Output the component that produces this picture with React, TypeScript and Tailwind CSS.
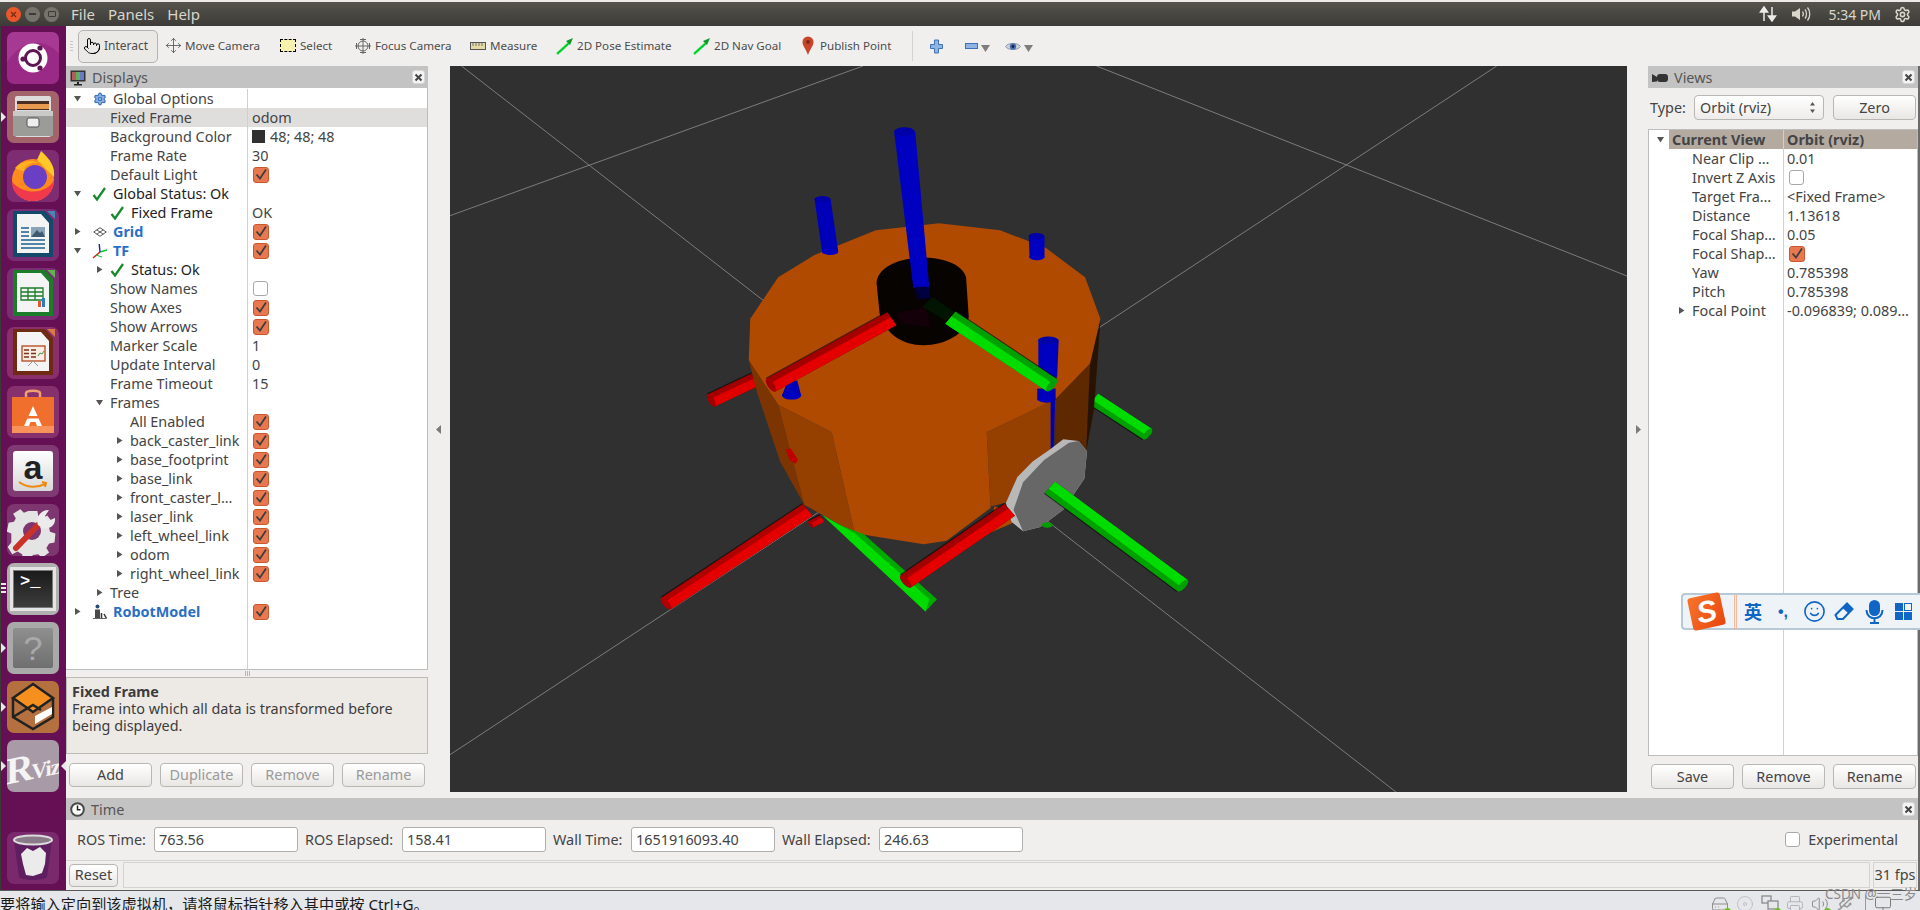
import { Disc, HardDrive, Monitor, Move, Pointer, Printer, Settings, Smile, Usb, Volume2 } from "lucide-react";
import type { ReactNode } from "react";

const CloseBtn = () => (
  <div className="flex h-[14px] w-[13px] items-center justify-center rounded-[3px] border border-[#d8d8d8] bg-[#f4f4f4]">
    <svg width="9" height="9" viewBox="0 0 9 9">
      <path d="M1.5 1.5l6 6M7.5 1.5l-6 6" stroke="#444" strokeWidth="2" />
    </svg>
  </div>
);

const Check = ({ on }: { on: boolean }) =>
  on ? (
    <svg width="16" height="16" viewBox="0 0 16 16" className="shrink-0">
      <rect x="0.5" y="0.5" width="15" height="15" rx="2.5" fill="#e8784f" stroke="#c9582f" />
      <path d="M3.5 7.5l3.5 4 6-9" fill="none" stroke="#3d3d3d" strokeWidth="1.7" />
    </svg>
  ) : (
    <svg width="15" height="15" viewBox="0 0 15 15" className="shrink-0">
      <rect x="0.5" y="0.5" width="14" height="14" rx="2.5" fill="#fff" stroke="#a8a8a8" />
    </svg>
  );

const Arrow = ({ open }: { open: boolean }) => (
  <svg width="9" height="9" viewBox="0 0 9 9" className="shrink-0">
    {open ? <path d="M1 2h7L4.5 7.5z" fill="#555" /> : <path d="M2 1v7l5.5-3.5z" fill="#555" />}
  </svg>
);

const GreenCheck = () => (
  <svg width="15" height="14" viewBox="0 0 15 14" className="shrink-0">
    <path d="M1.5 8l3.5 4.5L13 1" fill="none" stroke="#168a2c" strokeWidth="2.3" />
  </svg>
);

const GearIcon = () => <Settings size={14} className="shrink-0 fill-[#8fb3e6] text-[#3f73bd]" />;

const GridIcon = () => (
  <svg width="14" height="10" viewBox="0 0 14 10" className="shrink-0">
    <path d="M7 .7L13.3 5 7 9.3.7 5zM3.8 2.9l6.4 4.3M10.2 2.9L3.8 7.2" fill="none" stroke="#555" strokeWidth="1" />
  </svg>
);

const TfIcon = () => (
  <svg width="16" height="16" viewBox="0 0 16 16" className="shrink-0">
    <path d="M8 9L1 15" stroke="#e01818" strokeWidth="1.4" />
    <path d="M8 9l7-2" stroke="#12c02a" strokeWidth="1.4" />
    <path d="M8 9l-.8-8" stroke="#1a1acc" strokeWidth="1.4" />
    <path d="M4 12l6 2" stroke="#12c02a" strokeWidth="1" />
  </svg>
);

const RobotIcon = () => (
  <svg width="16" height="16" viewBox="0 0 16 16" className="shrink-0">
    <circle cx="5.5" cy="2.5" r="2" fill="#2c4a78" />
    <rect x="3" y="5.5" width="5" height="9" fill="#4a4a4a" />
    <path d="M9.5 9v5.5M12 10l2.5 4.5" stroke="#333" strokeWidth="1.5" fill="none" />
    <path d="M1 14.5h13" stroke="#666" strokeWidth="1" />
  </svg>
);

type Row = {
  label: string;
  level: 0 | 1 | 2;
  arrow?: "open" | "closed";
  icon?: ReactNode;
  value?: string;
  check?: boolean;
  kind?: "blue" | "dark";
};

const displayRows: Row[] = [
  { label: "Global Options", level: 0, arrow: "open", icon: <GearIcon /> },
  { label: "Fixed Frame", level: 1, value: "odom" },
  { label: "Background Color", level: 1, value: "48; 48; 48" },
  { label: "Frame Rate", level: 1, value: "30" },
  { label: "Default Light", level: 1, check: true },
  { label: "Global Status: Ok", level: 0, arrow: "open", icon: <GreenCheck />, kind: "dark" },
  { label: "Fixed Frame", level: 1, icon: <GreenCheck />, value: "OK", kind: "dark" },
  { label: "Grid", level: 0, arrow: "closed", icon: <GridIcon />, check: true, kind: "blue" },
  { label: "TF", level: 0, arrow: "open", icon: <TfIcon />, check: true, kind: "blue" },
  { label: "Status: Ok", level: 1, arrow: "closed", icon: <GreenCheck />, kind: "dark" },
  { label: "Show Names", level: 1, check: false },
  { label: "Show Axes", level: 1, check: true },
  { label: "Show Arrows", level: 1, check: true },
  { label: "Marker Scale", level: 1, value: "1" },
  { label: "Update Interval", level: 1, value: "0" },
  { label: "Frame Timeout", level: 1, value: "15" },
  { label: "Frames", level: 1, arrow: "open" },
  { label: "All Enabled", level: 2, check: true },
  { label: "back_caster_link", level: 2, arrow: "closed", check: true },
  { label: "base_footprint", level: 2, arrow: "closed", check: true },
  { label: "base_link", level: 2, arrow: "closed", check: true },
  { label: "front_caster_l…", level: 2, arrow: "closed", check: true },
  { label: "laser_link", level: 2, arrow: "closed", check: true },
  { label: "left_wheel_link", level: 2, arrow: "closed", check: true },
  { label: "odom", level: 2, arrow: "closed", check: true },
  { label: "right_wheel_link", level: 2, arrow: "closed", check: true },
  { label: "Tree", level: 1, arrow: "closed" },
  { label: "RobotModel", level: 0, arrow: "closed", icon: <RobotIcon />, check: true, kind: "blue" },
];

const viewRows: { label: string; value?: string; check?: boolean; arrow?: boolean }[] = [
  { label: "Near Clip …", value: "0.01" },
  { label: "Invert Z Axis", check: false },
  { label: "Target Fra…", value: "<Fixed Frame>" },
  { label: "Distance", value: "1.13618" },
  { label: "Focal Shap…", value: "0.05" },
  { label: "Focal Shap…", check: true },
  { label: "Yaw", value: "0.785398" },
  { label: "Pitch", value: "0.785398" },
  { label: "Focal Point", value: "-0.096839; 0.089…", arrow: true },
];

const levelPad = { 0: "pl-[7px]", 1: "pl-[29px]", 2: "pl-[49px]" };
const levelSlot = { 0: "w-[19px]", 1: "w-[15px]", 2: "w-[15px]" };

function DisplayRow({ row, active }: { row: Row; active: boolean }) {
  const text =
    row.kind === "blue" ? "font-bold text-[#2a6fc4]" : row.kind === "dark" ? "text-[#222222]" : "text-[#444444]";
  return (
    <div className={`flex h-[19px] items-center ${active ? "bg-[#dfdedc]" : ""}`}>
      <div className={`flex h-full w-[181px] shrink-0 items-center ${levelPad[row.level]}`}>
        <div className={`shrink-0 ${levelSlot[row.level]}`}>{row.arrow && <Arrow open={row.arrow === "open"} />}</div>
        {row.icon && <div className="mr-[6px] flex w-[15px] shrink-0 justify-center">{row.icon}</div>}
        <span className={`whitespace-nowrap ${text}`}>{row.label}</span>
      </div>
      <div className="flex h-full flex-1 items-center gap-[5px] border-l border-[#d0d0d0] pl-[4px] text-[#444444]">
        {row.label === "Background Color" && <span className="h-[13px] w-[13px] bg-[#303030]" />}
        {row.value}
        {row.check !== undefined && (
          <span className="ml-[1px]">
            <Check on={row.check} />
          </span>
        )}
      </div>
    </div>
  );
}

const Btn = ({ label, w, off, h = "h-[25px]" }: { label: string; w: string; off?: boolean; h?: string }) => (
  <div
    className={`flex ${w} ${h} items-center justify-center rounded-[4px] border border-[#b9b7b4] bg-linear-to-b from-white to-[#e9e7e4] ${
      off ? "text-[#9a9a9a]" : "text-[#444444]"
    }`}
  >
    {label}
  </div>
);

function ToolItem({ icon, label, className }: { icon: ReactNode; label: string; className: string }) {
  return (
    <div className={`flex shrink-0 items-center whitespace-nowrap text-[11.6px] text-[#4c4c4c] ${className}`}>
      {icon}
      {label}
    </div>
  );
}

const PoseArrow = () => (
  <svg width="18" height="18" viewBox="0 0 18 18">
    <path d="M1 17L13 6" stroke="#12e83a" strokeWidth="2.4" />
    <path d="M10 4l7-3-3 7z" fill="#0b9a28" />
    <path d="M1.5 16.5L12 7" stroke="#0b7a22" strokeWidth="0.6" />
  </svg>
);

const Toolbar = () => (
  <div className="flex h-[40px] items-center bg-[#f0efed] pl-[4px]">
    <div className="mr-[5px] flex w-[3px] flex-col gap-[2px]">
      <span className="h-[1px] bg-[#c8c8c8]" />
      <span className="h-[1px] bg-[#c8c8c8]" />
      <span className="h-[1px] bg-[#c8c8c8]" />
      <span className="h-[1px] bg-[#c8c8c8]" />
    </div>
    <div className="flex h-[33px] w-[80px] shrink-0 items-center gap-[3px] rounded-[5px] border border-[#b5b3b0] bg-[#ebe9e6] pl-[4px] text-[12px] text-[#4c4c4c]">
      <Pointer size={18} strokeWidth={1.3} className="text-black" />
      Interact
    </div>
    <ToolItem
      className="ml-[7px] w-[115px] gap-[3px]"
      icon={<Move size={17} strokeWidth={1.2} className="text-[#555555]" />}
      label="Move Camera"
    />
    <ToolItem
      className="w-[74px] gap-[4px]"
      icon={<span className="h-[13px] w-[16px] border border-dashed border-black bg-[#f7f3ae]" />}
      label="Select"
    />
    <ToolItem
      className="w-[116px] gap-[3px]"
      icon={
        <svg width="18" height="18" viewBox="0 0 18 18" fill="none" stroke="#666" strokeWidth="1">
          <circle cx="9" cy="9" r="5" />
          <path d="M9 1v16M1 9h16M6 2.5h6M6 15.5h6M2.5 6v6M15.5 6v6" />
        </svg>
      }
      label="Focus Camera"
    />
    <ToolItem
      className="w-[86px] gap-[4px]"
      icon={
        <svg width="16" height="8" viewBox="0 0 16 8">
          <rect x=".5" y=".5" width="15" height="7" fill="#e6d9a8" stroke="#555" />
          <path d="M3 1v3M6 1v3M9 1v3M12 1v3" stroke="#555" strokeWidth=".8" />
        </svg>
      }
      label="Measure"
    />
    <ToolItem className="w-[137px] gap-[3px]" icon={<PoseArrow />} label="2D Pose Estimate" />
    <ToolItem className="w-[109px] gap-[3px]" icon={<PoseArrow />} label="2D Nav Goal" />
    <ToolItem
      className="w-[110px] gap-[6px]"
      icon={
        <svg width="12" height="20" viewBox="0 0 12 20">
          <path d="M6 19C4 13 .5 10 .5 6a5.5 5.5 0 0111 0C11.500 10 8 13 6 19z" fill="#c8452a" />
          <circle cx="6" cy="6" r="2" fill="#7d2a18" />
        </svg>
      }
      label="Publish Point"
    />
    <span className="h-[30px] w-[1px] bg-[#d4d3d1]" />
    <svg width="13" height="15" viewBox="0 0 13 15" className="ml-[17px]">
      <path d="M4.500 1h4v4.500h4v4h-4V14h-4V9.500h-4v-4h4z" fill="#8fb4e4" stroke="#3e72b8" />
    </svg>
    <svg width="13" height="6" viewBox="0 0 13 6" className="ml-[22px]">
      <rect x=".5" y=".5" width="12" height="5" fill="#8fb4e4" stroke="#3e72b8" />
    </svg>
    <svg width="9" height="7" viewBox="0 0 9 7" className="ml-[3px] mt-[4px]">
      <path d="M0 0h9L4.500 7z" fill="#7d7d7d" />
    </svg>
    <svg width="16" height="11" viewBox="0 0 16 11" className="ml-[15px]">
      <path d="M.5 5.500C3 1.500 13 1.500 15.500 5.500 13 9.500 3 9.500.5 5.500z" fill="#cdd4e0" stroke="#8b93a3" />
      <circle cx="8" cy="5.500" r="3.200" fill="#4a6fb0" />
      <circle cx="8" cy="5.500" r="1.400" fill="#15203c" />
    </svg>
    <svg width="9" height="7" viewBox="0 0 9 7" className="ml-[3px] mt-[4px]">
      <path d="M0 0h9L4.500 7z" fill="#7d7d7d" />
    </svg>
  </div>
);

const Tile = ({
  bg,
  left,
  right,
  pips,
  children,
}: {
  bg: string;
  left?: boolean;
  right?: boolean;
  pips?: boolean;
  children: ReactNode;
}) => (
  <div className="relative h-[52px] w-[65px] shrink-0">
    {left && <span className="absolute left-0 top-[21px] h-0 w-0 border-y-[5px] border-l-[5px] border-y-transparent border-l-[#e8e8e8]" />}
    {right && <span className="absolute right-0 top-[21px] h-0 w-0 border-y-[5px] border-r-[5px] border-y-transparent border-r-[#e8e8e8]" />}
    {pips && (
      <span className="absolute left-0 top-[20px] flex flex-col gap-[2px]">
        <span className="h-[2px] w-[5px] bg-[#e8e8e8]" />
        <span className="h-[2px] w-[5px] bg-[#e8e8e8]" />
        <span className="h-[2px] w-[5px] bg-[#e8e8e8]" />
      </span>
    )}
    <div className={`absolute left-[6px] top-0 flex h-[52px] w-[52px] items-center justify-center overflow-hidden rounded-[7px] ${bg}`}>
      {children}
    </div>
  </div>
);

const Launcher = () => (
  <div className="flex h-full w-[66px] shrink-0 flex-col gap-[7px] border-l border-[#3c3a36] bg-[#650f55] pt-[6px]">
    <Tile bg="bg-[#9a2a86]">
      <svg width="52" height="52" viewBox="0 0 52 52">
        <path d="M0 30C14 8 38 4 52 22V0H0z" fill="#b14aa0" opacity=".5" />
        <circle cx="26" cy="26" r="14.500" fill="#fff" />
        <circle cx="26" cy="26" r="7.500" fill="none" stroke="#5e1650" strokeWidth="3" />
        <circle cx="33" cy="16" r="2.600" fill="#5e1650" />
        <circle cx="16" cy="27" r="2.600" fill="#5e1650" />
        <circle cx="33" cy="36" r="2.600" fill="#5e1650" />
      </svg>
    </Tile>
    <Tile bg="bg-[#a2636b]" left>
      <svg width="52" height="52" viewBox="0 0 52 52">
        <rect x="8" y="5" width="36" height="41" rx="2" fill="#dcdcdc" />
        <rect x="10" y="10" width="32" height="9" fill="#4b2e22" />
        <rect x="10" y="13" width="32" height="5" fill="#e89a50" />
        <rect x="6" y="20" width="40" height="25" fill="#9b9b97" />
        <rect x="6" y="20" width="40" height="5" fill="#c9c9c6" />
        <rect x="20" y="27" width="12" height="9" rx="2" fill="#eeeeee" stroke="#555" />
      </svg>
    </Tile>
    <Tile bg="bg-[#7f2d72]">
      <svg width="52" height="52" viewBox="0 0 52 52">
        <circle cx="26" cy="30" r="21" fill="#ff8a1e" />
        <path d="M34 1c10 9 14 16 13 26L30 10z" fill="#ffc928" />
        <path d="M5 32C5 44 16 51 26 51 38 51 47 42 47 30 40 44 18 46 5 32z" fill="#f03a4c" />
        <circle cx="28" cy="27" r="12" fill="#6b3fc4" />
        <path d="M8 18c6-7 15-9 24-5-8-1-14 2-15 8-3 0-6-1-9-3z" fill="#ffb11f" />
      </svg>
    </Tile>
    <Tile bg="bg-[#7b2d74]">
      <svg width="52" height="52" viewBox="0 0 52 52">
        <path d="M6 2h32l8 9v37H6z" fill="#14496b" />
        <path d="M10 5h24l8 9v30H10z" fill="#f4f4f4" />
        <path d="M40 2h8v8z" fill="#4a86b4" />
        <rect x="24" y="18" width="14" height="10" fill="#8aa4b8" />
        <path d="M24 28l6-7 3 3 2-2 3 6z" fill="#3e5a6e" />
        <path d="M14 19h8M14 23h8M14 27h8M14 31h24M14 35h24M14 39h24" stroke="#1c5f8e" strokeWidth="1.700" />
      </svg>
    </Tile>
    <Tile bg="bg-[#7b2d74]">
      <svg width="52" height="52" viewBox="0 0 52 52">
        <path d="M6 2h32l8 9v37H6z" fill="#1b7c2a" />
        <path d="M10 5h24l8 9v30H10z" fill="#f4f4f4" />
        <path d="M40 2h8v8z" fill="#62b04e" />
        <path d="M14 20h22v12H14zM14 24h22M14 28h22M21 20v12M28 20v12" fill="none" stroke="#1b7c2a" strokeWidth="1.300" />
        <rect x="31" y="33" width="3" height="6" fill="#e05a2a" />
        <rect x="35" y="30" width="3" height="9" fill="#2a7cc8" />
      </svg>
    </Tile>
    <Tile bg="bg-[#8b2f6c]">
      <svg width="52" height="52" viewBox="0 0 52 52">
        <path d="M6 2h32l8 9v37H6z" fill="#6e2a12" />
        <path d="M10 5h24l8 9v30H10z" fill="#f4f4f4" />
        <path d="M40 2h8v8z" fill="#d87a42" />
        <rect x="15" y="19" width="23" height="15" fill="#f8ece4" stroke="#b3471c" strokeWidth="1.300" />
        <path d="M17 23h5M17 26.500h5M17 30h5M24 23h5M24 26.500h5M24 30h5" stroke="#7b3218" strokeWidth="1.300" />
        <path d="M31 29l2-3 2 1 2-3" stroke="#3c9a3c" strokeWidth="1" fill="none" />
        <path d="M26 34l-5 5M26 34l5 5" stroke="#999" />
      </svg>
    </Tile>
    <Tile bg="bg-[#86306e]">
      <svg width="52" height="52" viewBox="0 0 52 52">
        <path d="M19 12V7c0-3 14-3 14 0v5" fill="none" stroke="#f0a070" strokeWidth="2.500" />
        <rect x="5" y="11" width="42" height="36" fill="#f06f2c" />
        <rect x="5" y="40" width="42" height="7" fill="#f8925a" />
        <path d="M26 20l9 20h-5l-1.500-4h-5L22 40h-5z" fill="#fff" />
        <rect x="17" y="30" width="18" height="2.500" fill="#f06f2c" />
      </svg>
    </Tile>
    <Tile bg="bg-[#7f3a74]">
      <div className="flex h-[40px] w-[40px] flex-col items-center justify-center rounded-[3px] bg-linear-to-b from-white to-[#d8d8d8]">
        <span className="font-['Liberation_Sans',sans-serif] text-[34px] font-bold leading-[28px] text-[#222222]">a</span>
        <svg width="30" height="8" viewBox="0 0 30 8">
          <path d="M1 1c8 6 18 6 26 2M24 1l4 1-1 4" fill="none" stroke="#f08a10" strokeWidth="2" />
        </svg>
      </div>
    </Tile>
    <Tile bg="bg-[#7e3671]">
      <svg width="52" height="52" viewBox="0 0 52 52">
        <path
          d="M21 5h10l1 6 5 2 5-3 6 8-4 5 1 5 6 2-1 10-6 1-3 5 3 5-8 6-4-4-6 1-3 4h-8l-1-5-5-3-6 3-5-8 4-5V30l-5-2 2-10 6-1 2-4-3-5 8-5 4 4z"
          fill="#e4e4e4"
          transform="translate(2.500 2.500) scale(.9)"
        />
        <circle cx="25" cy="27" r="9" fill="#7e3671" />
        <path d="M9 44L33 19" stroke="#c8322a" strokeWidth="6" strokeLinecap="round" />
        <path d="M31 21c-3-7 2-15 11-15l-4 6 3 5 7-3c1 9-9 14-17 7z" fill="#ececec" />
      </svg>
    </Tile>
    <Tile bg="bg-[#b0b0ae]" pips>
      <div className="flex h-[44px] w-[46px] items-center justify-center border-[3px] border-[#e4e4e4] bg-[#7a7a78] p-[1px]">
        <div className="h-full w-full bg-linear-to-b from-[#1b1b1b] to-[#3d3d3d] pl-[6px] pt-[2px] font-['Liberation_Mono',monospace] text-[17px] font-bold leading-[18px] text-white">
          &gt;_
        </div>
      </div>
    </Tile>
    <Tile bg="bg-[#a9a9a9]" left>
      <div className="flex h-[40px] w-[40px] items-center justify-center rounded-[2px] bg-linear-to-b from-[#8f8f8f] to-[#6f6f6f] font-['Liberation_Sans',sans-serif] text-[34px] text-[#a9a9a9]">
        ?
      </div>
    </Tile>
    <Tile bg="bg-[#b4713f]" left>
      <svg width="52" height="52" viewBox="0 0 52 52">
        <path d="M26 3L46 17 26 31 6 17z" fill="#f5901e" stroke="#222" strokeWidth="2.500" />
        <path d="M6 17v19l20 12 20-12V17" fill="none" stroke="#222" strokeWidth="2.500" />
        <path d="M6 36l20-12 8 5" fill="none" stroke="#222" strokeWidth="2.500" />
        <path d="M28 43v-8l17-9v7z" fill="#fff" />
      </svg>
    </Tile>
    <Tile bg="bg-[#a89aa6]" left right>
      <div className="flex -skew-y-12 items-baseline font-['Liberation_Serif',serif] font-bold text-[#f4f4f4]">
        <span className="text-[38px] leading-none">R</span>
        <span className="-ml-[2px] text-[22px] leading-none tracking-[-1px]">Viz</span>
      </div>
    </Tile>
    <div className="mt-auto mb-[6px]">
      <Tile bg="bg-[#7a2a6c]">
        <svg width="52" height="52" viewBox="0 0 52 52">
          <path d="M7 8l5 37c4 4 24 4 28 0l5-37z" fill="#5e1e60" />
          <ellipse cx="26" cy="8" rx="19" ry="4.500" fill="#8a7a8a" stroke="#dcdcdc" strokeWidth="2" />
          <path d="M14 22l6-6 6 3 7-4 6 6-1 11-3 9-9 3-7-1-3-11z" fill="#ecebec" />
        </svg>
      </Tile>
    </div>
  </div>
);

const poly = (x1: number, y1: number, x2: number, y2: number, a: number, b: number) => {
  const len = Math.hypot(x2 - x1, y2 - y1);
  const nx = -(y2 - y1) / len;
  const ny = (x2 - x1) / len;
  return [
    [x1 + nx * a, y1 + ny * a],
    [x2 + nx * a, y2 + ny * a],
    [x2 + nx * b, y2 + ny * b],
    [x1 + nx * b, y1 + ny * b],
  ]
    .map((p) => p.join(","))
    .join(" ");
};

function Cyl({ p, w, c, d, flip }: { p: number[]; w: number; c: string; d: string; flip?: boolean }) {
  const [x1, y1, x2, y2] = p;
  const s = flip ? -1 : 1;
  const angle = (Math.atan2(y2 - y1, x2 - x1) * 180) / Math.PI;
  return (
    <g>
      <polygon points={poly(x1, y1, x2, y2, (s * w) / 2 + s * 3, (-s * w) / 2)} fill="#000" opacity=".6" />
      <polygon points={poly(x1, y1, x2, y2, w / 2, -w / 2)} fill={d} />
      <polygon points={poly(x1, y1, x2, y2, s * w * 0.12, -s * w * 0.5)} fill={c} />
      <ellipse cx={x2} cy={y2} rx={w / 5} ry={w / 2} transform={`rotate(${angle} ${x2} ${y2})`} fill={d} />
    </g>
  );
}

const Scene = () => (
  <svg viewBox="450 66 1177 726" className="block h-full w-full">
    <g stroke="#7c7c7c" strokeWidth="1">
      <path d="M461.500 66L1396 792" />
      <path d="M450 215.700L863 66" />
      <path d="M1096.500 66L1627 276" />
      <path d="M1496.700 66L450 754.700" />
    </g>
    <g transform="translate(650 100) scale(0.38265 0.34439)">
      <Cyl p={[275, 812, 160, 872]} w={40} c="#e00000" d="#a00000" />
      <Cyl p={[1160, 868, 1300, 970]} w={38} c="#00dc00" d="#00a000" />
      <polygon points="258,755 335,885 403,1175 340,1050 280,850" fill="#7c3400" />
      <polygon points="335,885 475,965 535,1258 403,1175" fill="#953f00" />
      <polygon points="880,965 1060,868 1055,1010 945,1165 890,1180" fill="#953f00" />
      <polygon points="1060,868 1150,765 1140,1020 1060,1005" fill="#5f2900" />
      <polygon points="1150,765 1177,640 1160,900 1140,1020" fill="#281200" />
      <polygon points="590,378 755,358 915,378 1035,430 1137,515 1177,635 1150,765 1060,868 880,965 890,1185 775,1280 715,1290 535,1258 475,965 335,885 258,755 262,635 335,515 430,450" fill="#b04a00" />
      <polygon points="885,1258 945,1230 960,1200 900,1180" fill="#b04a00" />
      <polygon points="355,1015 368,1012 387,1045 380,1056 365,1045" fill="#c00000" />
      <Cyl p={[450, 1215, 420, 1232]} w={22} c="#d80000" d="#a00000" />
      <polygon points="450,1205 475,1225 560,1262 750,1450 720,1485" fill="#00a800" />
      <polygon points="450,1205 535,1258 730,1450 720,1485" fill="#00dc00" />
      <path d="M592 530C596 490 640 460 710 458 770 456 818 480 826 515L833 630C825 680 770 712 715 712 660 712 615 680 600 620z" fill="#070300" />
      <polygon points="638,92 693,92 730,545 688,545" fill="#0000c0" />
      <ellipse cx="665" cy="92" rx="27" ry="13" fill="#0000a8" />
      <polygon points="692,542 730,542 733,575 700,578" fill="#000040" />
      <polygon points="430,288 472,288 492,440 450,443" fill="#0000b8" />
      <ellipse cx="451" cy="288" rx="21" ry="9" fill="#0000a8" />
      <ellipse cx="471" cy="441" rx="21" ry="9" fill="#0000c0" />
      <polygon points="990,395 1031,395 1031,458 992,458" fill="#0000c0" />
      <ellipse cx="1010" cy="395" rx="20" ry="9" fill="#0000a8" />
      <ellipse cx="1011" cy="456" rx="20" ry="9" fill="#0000c0" />
      <polygon points="360,815 385,815 395,858 345,858" fill="#0000b8" />
      <ellipse cx="370" cy="858" rx="25" ry="12" fill="#0000c0" />
      <polygon points="1012,838 1060,838 1060,870 1012,870" fill="#0000b8" />
      <ellipse cx="1036" cy="868" rx="24" ry="11" fill="#0000c0" />
      <polygon points="1047,870 1059,870 1055,1020 1047,1020" fill="#0000b0" />
      <polygon points="1015,698 1068,698 1064,805 1015,805" fill="#0000c0" />
      <ellipse cx="1041" cy="698" rx="27" ry="11" fill="#0000a8" />
      <Cyl p={[632, 635, 316, 828]} w={44} c="#e40000" d="#a40000" />
      <polygon points="640,620 720,600 735,660 660,650" fill="#140008" />
      <polygon points="712,600 738,572 795,615 772,640" fill="#021402" />
      <Cyl p={[785, 632, 1050, 828]} w={44} c="#00dc00" d="#00a000" flip />
      <polygon points="1080,985 1120,990 1142,1020 1135,1100 1080,1190 1020,1240 975,1252 945,1225 930,1170 960,1095 1000,1050 1045,1015" fill="#b8b8b8" />
      <polygon points="1095,995 1120,990 1142,1020 1135,1100 1080,1190 1020,1240 975,1252 950,1190 975,1110 1030,1045" fill="#676767" />
      <Cyl p={[1045, 1125, 1392, 1410]} w={42} c="#00dc00" d="#00a000" />
      <ellipse cx="1038" cy="1234" rx="14" ry="8" fill="#00a000" />
      <Cyl p={[940, 1190, 668, 1398]} w={44} c="#e40000" d="#a40000" />
      <Cyl p={[412, 1190, 42, 1462]} w={42} c="#e40000" d="#b00000" />
    </g>
  </svg>
);

const Title = ({ icon, label }: { icon: ReactNode; label: string }) => (
  <div className="flex h-[22px] shrink-0 items-center justify-between bg-[#c3c3c3] pl-[4px] pr-[3px]">
    <div className="flex items-center gap-[6px] pt-[1px] text-[#555555]">
      {icon}
      {label}
    </div>
    <CloseBtn />
  </div>
);

const DisplaysPanel = () => (
  <div className="flex h-full w-[362px] shrink-0 flex-col">
    <Title
      label="Displays"
      icon={
        <svg width="16" height="16" viewBox="0 0 16 16">
          <rect x=".5" y=".5" width="15" height="11" fill="#333" />
          <rect x="2" y="2" width="4" height="8" fill="#b85a5a" />
          <rect x="6" y="2" width="4" height="8" fill="#5eb05e" />
          <rect x="10" y="2" width="4" height="8" fill="#6a78c8" />
          <path d="M7 12h2v2h3v1.500H4V14h3z" fill="#222" />
        </svg>
      }
    />
    <div className="flex h-[582px] flex-col border-r border-b border-[#bdbdbd] bg-white pt-[1px]">
      {displayRows.map((r, i) => (
        <DisplayRow key={i} row={r} active={i === 1} />
      ))}
      <div className="ml-[181px] flex-1 border-l border-[#d0d0d0]" />
    </div>
    <div className="flex h-[7px] items-center justify-center gap-[1px]">
      <span className="h-[5px] w-[1px] bg-[#b5b5b5]" />
      <span className="h-[5px] w-[1px] bg-[#b5b5b5]" />
      <span className="h-[5px] w-[1px] bg-[#b5b5b5]" />
    </div>
    <div className="h-[77px] border border-[#bdbbb7] bg-[#edeae6] px-[5px] pt-[5px] leading-[17px] text-[#3c3c3c]">
      <div className="font-bold">Fixed Frame</div>
      <div>Frame into which all data is transformed before</div>
      <div>being displayed.</div>
    </div>
    <div className="mt-[9px] flex gap-[8px] pl-[3px]">
      <Btn label="Add" w="w-[83px]" h="h-[24px]" />
      <Btn label="Duplicate" w="w-[83px]" h="h-[24px]" off />
      <Btn label="Remove" w="w-[83px]" h="h-[24px]" off />
      <Btn label="Rename" w="w-[83px]" h="h-[24px]" off />
    </div>
  </div>
);

const ViewsPanel = () => (
  <div className="flex h-full w-[272px] shrink-0 flex-col border-r-2 border-[#6a6a6a]">
    <Title
      label="Views"
      icon={
        <svg width="16" height="10" viewBox="0 0 16 10">
          <path d="M0 1l5 3V1.500h0V8.500L0 9z" fill="#333" />
          <rect x="5" y="1" width="11" height="8" rx="3" fill="#333" />
        </svg>
      }
    />
    <div className="flex items-center pl-[2px] pt-[7px] text-[#444444]">
      <span className="w-[44px]">Type:</span>
      <div className="flex h-[25px] w-[130px] items-center justify-between rounded-[4px] border border-[#b9b7b4] bg-linear-to-b from-white to-[#eeecea] pl-[5px] pr-[7px]">
        Orbit (rviz)
        <svg width="7" height="13" viewBox="0 0 7 13">
          <path d="M3.500 1L6 4.500H1zM3.500 12L6 8.500H1z" fill="#555" />
        </svg>
      </div>
      <div className="ml-[9px]">
        <Btn label="Zero" w="w-[83px]" />
      </div>
    </div>
    <div className="mt-[9px] flex h-[627px] flex-col border border-[#bdbdbd] bg-white">
      <div className="flex h-[19px] items-center font-bold text-[#444444]">
        <div className="flex h-full w-[20px] items-center justify-center pl-[2px]">
          <Arrow open />
        </div>
        <div className="flex h-full w-[114px] items-center bg-[#b5aaa0] pl-[3px]">Current View</div>
        <div className="flex h-full flex-1 items-center border-l border-[#d0d0d0] bg-[#b5aaa0] pl-[3px]">Orbit (rviz)</div>
      </div>
      {viewRows.map((r, i) => (
        <div key={i} className="flex h-[19px] items-center text-[#444444]">
          <div className="flex h-full w-[134px] items-center pl-[28px]">
            <span className="flex w-[15px] shrink-0 items-center">{r.arrow && <Arrow open={false} />}</span>
            <span className="whitespace-nowrap">{r.label}</span>
          </div>
          <div className="flex h-full flex-1 items-center whitespace-nowrap border-l border-[#d0d0d0] pl-[3px]">
            {r.value}
            {r.check !== undefined && (
              <span className="ml-[2px]">
                <Check on={r.check} />
              </span>
            )}
          </div>
        </div>
      ))}
      <div className="ml-[134px] flex-1 border-l border-[#d0d0d0]" />
    </div>
    <div className="mt-[8px] flex gap-[8px] pl-[3px]">
      <Btn label="Save" w="w-[83px]" />
      <Btn label="Remove" w="w-[83px]" />
      <Btn label="Rename" w="w-[83px]" />
    </div>
  </div>
);

const TimeField = ({ label, value, w }: { label: string; value: string; w: string }) => (
  <>
    <span className={`ml-[7px] ${w} text-[#444444]`}>{label}</span>
    <div className="flex h-[25px] w-[144px] items-center rounded-[3px] border border-[#b0aeab] bg-white pl-[4px] text-[#444444]">
      {value}
    </div>
  </>
);

const TimePanel = () => (
  <div className="flex h-[92px] shrink-0 flex-col border-r-2 border-[#6a6a6a]">
    <Title
      label="Time"
      icon={
        <svg width="15" height="15" viewBox="0 0 15 15">
          <circle cx="7.500" cy="7.500" r="6.300" fill="#fff" stroke="#4a4a4a" strokeWidth="2" />
          <path d="M7.500 3.500v4.300h3" fill="none" stroke="#222" strokeWidth="1.500" />
        </svg>
      }
    />
    <div className="flex items-center pl-[4px] pt-[7px]">
      <TimeField label="ROS Time:" value="763.56" w="w-[77px]" />
      <TimeField label="ROS Elapsed:" value="158.41" w="w-[97px]" />
      <TimeField label="Wall Time:" value="1651916093.40" w="w-[78px]" />
      <TimeField label="Wall Elapsed:" value="246.63" w="w-[97px]" />
      <div className="ml-auto flex items-center gap-[8px] pr-[20px] text-[#444444]">
        <Check on={false} />
        Experimental
      </div>
    </div>
    <div className="mt-[8px] h-[1px] bg-[#d4d3d1]" />
    <div className="mt-[1px] flex h-[26px] items-center pl-[3px] pr-[1px]">
      <Btn label="Reset" w="w-[49px]" h="h-[23px]" />
      <div className="ml-[5px] h-full flex-1 border border-[#d4d3d1]" />
      <div className="ml-[3px] flex h-full w-[44px] items-center justify-center border border-[#d4d3d1] text-[#444444]">31 fps</div>
    </div>
  </div>
);

const StatusDot = () => <span className="absolute -bottom-[2px] -right-[2px] h-[7px] w-[7px] rounded-full bg-[#6cc21c]" />;

const StatusBar = () => (
  <div className="relative flex h-[20px] shrink-0 items-start overflow-hidden border-t border-[#5a5a5a] bg-[#e5e7ea] pt-[6px] font-['Noto_Sans','Noto_Sans_CJK_SC',sans-serif] text-[15.2px] leading-none text-[#1a1a1a]">
    要将输入定向到该虚拟机，请将鼠标指针移入其中或按 Ctrl+G。
    <div className="ml-auto mr-[28px] -mt-[2px] flex items-start gap-[7px] text-[#8a8a8a]">
      <span className="relative">
        <HardDrive size={18} strokeWidth={1.3} />
        <StatusDot />
      </span>
      <Disc size={18} strokeWidth={1} className="text-[#b5b5b5]" />
      <span className="relative">
        <svg width="18" height="18" viewBox="0 0 18 18" fill="none" stroke="currentColor" strokeWidth="1.300">
          <rect x="1" y="1" width="9" height="7" />
          <rect x="7" y="6" width="10" height="8" fill="#e5e7ea" />
        </svg>
        <StatusDot />
      </span>
      <Printer size={18} strokeWidth={1.2} className="text-[#b0b0b0]" />
      <span className="relative">
        <Volume2 size={18} strokeWidth={1.3} />
        <StatusDot />
      </span>
      <Usb size={18} strokeWidth={2} className="text-[#9a9a9a]" />
      <span className="ml-[4px] border-l border-[#9a9a9a] pl-[8px]">
        <Monitor size={18} strokeWidth={1.3} className="text-[#777777]" />
      </span>
    </div>
  </div>
);

const Sogou = () => (
  <div className="absolute left-[1681px] top-[593px] flex h-[37px] w-[239px] items-center rounded-l-[4px] border-2 border-r-0 border-[#b7c8d6] bg-[#eef3f7] text-[#0f66c4]">
    <div className="ml-[7px] flex h-[33px] w-[33px] -rotate-12 items-center justify-center rounded-[3px] bg-linear-to-br from-[#f8742a] to-[#e8440c] font-['Liberation_Sans',sans-serif] text-[30px] font-bold italic leading-none text-white">
      S
    </div>
    <span className="ml-[11px] h-[34px] w-[3px] border-x border-[#f6b9a0]" />
    <span className="ml-[7px] font-['Noto_Sans_CJK_SC',sans-serif] text-[18px] font-bold">英</span>
    <span className="ml-[16px] font-['Liberation_Sans',sans-serif] text-[16px] font-bold leading-none">•,</span>
    <Smile size={23} strokeWidth={1.7} className="ml-[15px]" />
    <svg width="20" height="20" viewBox="0 0 20 20" className="ml-[8px]">
      <path d="M13 1.500l5.500 5.500-9.500 10H3.500L1.500 13z" fill="none" stroke="#0f66c4" strokeWidth="2" />
      <path d="M13 1.500l5.500 5.500-4 4.500L8.500 6z" fill="#0f66c4" />
    </svg>
    <svg width="21" height="24" viewBox="0 0 21 24" className="ml-[10px]" fill="none" stroke="#0f66c4" strokeWidth="2">
      <rect x="6" y="1" width="9" height="14" rx="4.500" fill="#0f66c4" />
      <path d="M2.500 10c0 11 16 11 16 0M10.500 19v4M6 23h9" />
    </svg>
    <div className="ml-[10px] grid grid-cols-2 gap-[1px]">
      <span className="h-[8px] w-[8px] bg-[#0f66c4]" />
      <span className="h-[8px] w-[8px] border border-[#0f66c4]" />
      <span className="h-[8px] w-[8px] bg-[#0f66c4]" />
      <span className="h-[8px] w-[8px] bg-[#0f66c4]" />
    </div>
  </div>
);

const Chevron = ({ left }: { left?: boolean }) => (
  <div className={`flex h-full shrink-0 items-center justify-center pb-[6px] ${left ? "w-[22px]" : "w-[21px]"}`}>
    <svg width="6" height="9" viewBox="0 0 6 9">
      <path d={left ? "M5 0v9L0 4.500z" : "M1 0v9l5-4.500z"} fill="#7a7a7a" />
    </svg>
  </div>
);

export default function App() {
  return (
    <div className="relative flex h-[910px] w-[1920px] flex-col overflow-hidden bg-[#f0efed] font-['Noto_Sans',sans-serif] text-[14.4px]">
      <div className="h-[2px] shrink-0 bg-[#ecebe8]" />
      <div className="flex h-[24px] shrink-0 items-center bg-linear-to-b from-[#55534c] to-[#3c3b37] text-[15px] text-[#d9d6cc]">
        <div className="ml-[6px] flex h-[15px] w-[15px] items-center justify-center rounded-full bg-[#e9582a]">
          <svg width="7" height="7" viewBox="0 0 7 7">
            <path d="M1 1l5 5M6 1L1 6" stroke="#7a2a10" strokeWidth="1.300" />
          </svg>
        </div>
        <div className="ml-[4px] flex h-[15px] w-[15px] items-center justify-center rounded-full bg-[#75736c]">
          <span className="h-[2px] w-[7px] bg-[#3c3b37]" />
        </div>
        <div className="ml-[4px] flex h-[15px] w-[15px] items-center justify-center rounded-full bg-[#75736c]">
          <span className="h-[6px] w-[8px] rounded-[1px] border border-[#3c3b37]" />
        </div>
        <span className="ml-[12px]">File</span>
        <span className="ml-[13px]">Panels</span>
        <span className="ml-[13px]">Help</span>
        <svg width="18" height="16" viewBox="0 0 18 16" className="ml-auto">
          <path d="M5 15V5M1.500 6L5 1l3.500 5z" fill="#ecebe8" stroke="#ecebe8" strokeWidth="1.500" />
          <path d="M13 1v10M9.500 10L13 15l3.500-5z" fill="#ecebe8" stroke="#ecebe8" strokeWidth="1.500" />
        </svg>
        <svg width="20" height="16" viewBox="0 0 20 16" className="ml-[14px]" fill="none">
          <path d="M1 5.500h3L9 2v12L4 10.500H1z" fill="#d9d6cc" />
          <path d="M11.500 5.500c1 1.500 1 3.500 0 5M14 3.500c2 2.500 2 6.500 0 9M16.500 1.500c3 3.500 3 9.500 0 13" stroke="#d9d6cc" strokeWidth="1.300" />
        </svg>
        <span className="ml-[17px] text-[14px]">5:34 PM</span>
        <Settings size={17} strokeWidth={2.200} className="ml-[13px] mr-[9px]" />
      </div>
      <div className="flex h-[864px] shrink-0">
        <Launcher />
        <div className="flex min-w-0 flex-1 flex-col">
          <Toolbar />
          <div className="flex h-[732px] shrink-0">
            <DisplaysPanel />
            <Chevron left />
            <div className="h-[726px] w-[1177px] shrink-0 bg-[#303030]">
              <Scene />
            </div>
            <Chevron />
            <ViewsPanel />
          </div>
          <TimePanel />
        </div>
      </div>
      <StatusBar />
      <Sogou />
      <div className="absolute left-[1825px] top-[884px] font-['Noto_Sans','Noto_Sans_CJK_SC',sans-serif] text-[13.5px] text-[#8a8a8a]">
        CSDN @一三岁
      </div>
    </div>
  );
}
